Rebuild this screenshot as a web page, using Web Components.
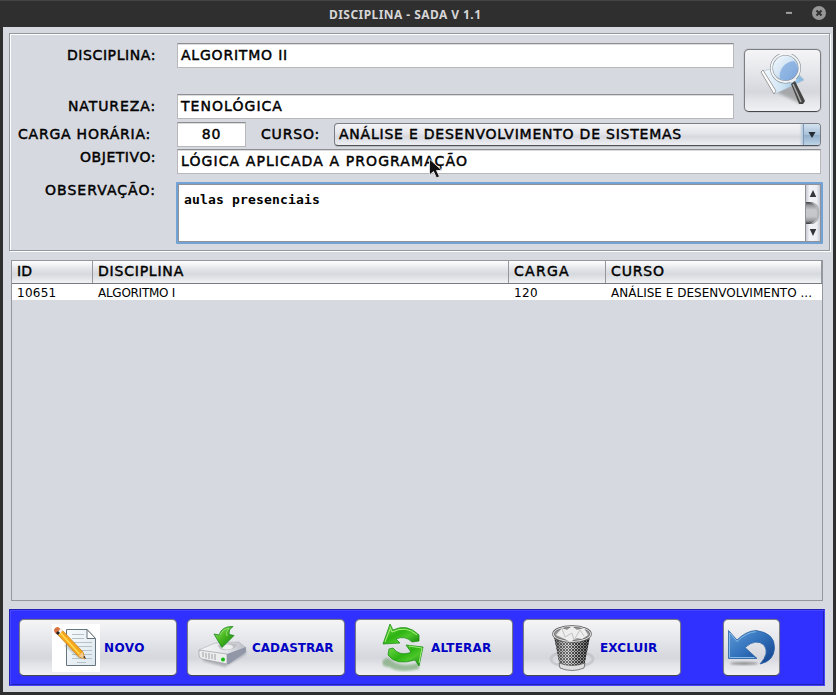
<!DOCTYPE html>
<html lang="pt-BR"><head><meta charset="utf-8"><title>DISCIPLINA - SADA V 1.1</title>
<style>
html,body{margin:0;width:836px;height:695px;overflow:hidden;background:#2f2f2f}
body{font-family:"DejaVu Sans",sans-serif;color:#000}
</style></head><body>
<sada-window></sada-window>
<script>
const define=(name,html,after)=>customElements.define(name,class extends HTMLElement{
  connectedCallback(){
    if(this.shadowRoot)return;
    const t=document.createElement('template');t.innerHTML=html;
    this.attachShadow({mode:'open'}).append(t.content.cloneNode(true));
    if(after)after(this,this.shadowRoot);
  }
});

// Text line whose tracking is adjusted to an exact advance width (w).
define('ui-text',`<style>:host{display:block;white-space:pre;line-height:var(--line,16px);height:16px;flex:none}span{display:inline-block}</style><span></span>`,(el,r)=>{
  const s=r.querySelector('span'),t=el.getAttribute('t');s.textContent=t;
  const w=+el.getAttribute('w');
  if(w)s.style.letterSpacing=((w-s.getBoundingClientRect().width)/t.length)+'px';
});

define('ui-titlebar',`<style>
:host{--line:18px;display:flex;height:27px;box-sizing:border-box;border-top:1px solid #444;background:#2f2f2f;color:#d6d6d6;align-items:center;padding:0 10px 0 329px;font:bold 12px "Noto Sans",sans-serif}
svg{margin-left:auto}</style>
<ui-text t="DISCIPLINA - SADA V 1.1" w="152.5"></ui-text>
<svg width="46" height="26" viewBox="0 0 46 26"><path d="M6 11.9h6" stroke="#a0a0a0" stroke-width="2"/><circle cx="39" cy="12" r="7" fill="#969696"/><path d="M36.500 9.500l5 5m0-5l-5 5" stroke="#303030" stroke-width="2"/></svg>`);

define('ui-field',`<style>
:host{display:flex;box-sizing:border-box;height:25px;background:#fff;border:1px solid #b8b8bb;border-top-color:#8d8e92;box-shadow:inset 0 1px #dcdcde;font:14px "DejaVu Sans",sans-serif;-webkit-text-stroke:.45px;padding:3px 0 0 3px;flex:none}
:host([center]){justify-content:center;padding-left:0}</style><slot></slot>`);

define('ui-label',`<style>:host{display:flex;justify-content:flex-end;width:145px;margin-right:21px;flex:none;font:14px "DejaVu Sans",sans-serif;-webkit-text-stroke:.45px}</style><slot></slot>`);

define('ui-combo',`<style>
:host{display:flex;box-sizing:border-box;width:487px;height:23px;border:1px solid #7b7d84;border-bottom-color:#505258;box-shadow:0 1px #b9bcc3;border-radius:4px;background:linear-gradient(#f5f5f7,#e4e5ea 45%,#d7d9df 60%,#eeeff3);font:14px "DejaVu Sans",sans-serif;-webkit-text-stroke:.45px;padding-left:4px;overflow:hidden}
ui-text{margin-top:2px}
b{margin-left:auto;width:16px;background:linear-gradient(#d3e2ef,#a9c1d9 50%,#93afca 55%,#bed5e8);border-left:1px solid #7f9ab8;box-shadow:-2px 0 2px #b8cadb;display:grid;place-items:center}
</style><ui-text t="ANÁLISE E DESENVOLVIMENTO DE SISTEMAS" w="343"></ui-text><b><svg width="8" height="6"><path d="M0.500 0h7L4 6z" fill="#232b33"/></svg></b>`);

define('ui-textarea',`<style>
:host{--line:18px;display:flex;box-sizing:border-box;width:647px;height:62px;border:2px solid #73a3d4;border-radius:1px;background:#fff;font:bold 13px "DejaVu Sans Mono",monospace;flex:none}
main{flex:1;display:flex;border:1px solid #8f9299;border-right:0;padding:6px 0 0 5px}
svg{border:1px solid #8f9299;flex:none}
</style><main><slot></slot></main>
<svg width="14" height="56" viewBox="0 0 15 56" preserveAspectRatio="none"><defs><linearGradient id="t"><stop stop-color="#c8cad2"/><stop offset=".25" stop-color="#f2f3f7"/><stop offset=".75" stop-color="#eceef3"/><stop offset="1" stop-color="#c9ccd5"/></linearGradient><linearGradient id="kb" x2="0" y2="1"><stop stop-color="#3f3f41"/><stop offset=".15" stop-color="#96979a"/><stop offset=".35" stop-color="#c6c7ca"/><stop offset=".65" stop-color="#c6c7ca"/><stop offset=".85" stop-color="#96979a"/><stop offset="1" stop-color="#39393b"/></linearGradient></defs>
<path fill="url(#t)" d="M0 0h15v56H0z"/><path d="M0 17h4c7 0 10.500 5 10.500 11S11 39 4 39H0z" fill="url(#kb)"/><path d="M4 17q10.500 1 10.500 11T4 39q8-3 8-11t-8-11z" fill="#b4b6ba"/><path d="M7.500 5l3.500 7H4zM7.500 51l3.500-7H4z" fill="#35363a"/></svg>`);

define('ui-button',`<style>
:host{display:flex;box-sizing:border-box;width:158px;height:57px;border:1px solid #7c7d82;border-bottom-color:#46474d;border-radius:5px;background:linear-gradient(#f5f5f7,#e6e7eb 35%,#d7d9df 64%,#d5d7dd 69%,#e4e5e9 82%,#f1f1f4 100%);box-shadow:0 0 1px #55565c;align-items:center;color:#0000c4;font:bold 12px "DejaVu Sans",sans-serif;flex:none}
</style><slot></slot>`);

const icons={
search:`<svg width="50" height="56" viewBox="0 0 50 56"><defs><linearGradient id="a" x1="0" x2="1"><stop stop-color="#f4f9fd"/><stop offset=".5" stop-color="#cbe2f3"/><stop offset="1" stop-color="#7fb4dc"/></linearGradient><linearGradient id="l" x2="1" y2="1"><stop stop-color="#fafdff"/><stop offset=".45" stop-color="#d5e6f5"/><stop offset="1" stop-color="#8fb6e2"/></linearGradient><filter id="f"><feGaussianBlur stdDeviation="1.500"/></filter></defs>
<path d="M17 38l15-10 12 18-4 3z" fill="#777" opacity=".5" filter="url(#f)"/>
<path d="M4 17l26-7 15 16-29 14z" fill="url(#a)" stroke="#aebdca" stroke-width=".6"/><path d="M2 18l2-2 13 21-2 3z" fill="#fff" stroke="#888" stroke-width=".8"/>
<circle cx="26.500" cy="14" r="14" fill="url(#l)"/><path d="M21 25a15 15 0 0 1 14-18 13 13 0 0 1 3 15q-7 7-17 3" fill="#6999d8" opacity=".6"/><circle cx="26.500" cy="14" r="14" fill="none" stroke="#858d95" stroke-width="3"/><circle cx="26.500" cy="14" r="14" fill="none" stroke="#f3f5f7" stroke-width="1.900"/>
<path d="M32 30l4-3 10 20-2 3-4 0z" fill="#444"/><path d="M34 30l8 18" stroke="#aaa" stroke-width="1.500"/><path d="M31 28l6-3" stroke="#eee" stroke-width="2.500"/></svg>`,
novo:`<svg width="48" height="48" viewBox="0 0 48 48"><defs><linearGradient id="p" x2="1" y2="1"><stop stop-color="#f8fbfc"/><stop offset="1" stop-color="#dce7ee"/></linearGradient></defs><path fill="#fff" d="M0 0h48v48H0z"/><path d="M14.500 5.500H35l8.500 9v27h-29z" fill="url(#p)" stroke="#66747e"/><path d="M35 5.500v9h8.500z" fill="#fff" stroke="#66747e"/><path d="M20 10.500h12M20 14.500h12M20 18.500h20M20 22.500h20M20 26.500h20M20 30.500h20M20 34.500h20M25 38.500h9" stroke="#b6c2ca"/><path d="M12 22l14 12 6 1-17-17z" fill="#899" opacity=".35"/>
<path d="M6 11l4-5 21 22 2 7-6-2z" fill="#f7a51b" stroke="#c37b16" stroke-width=".7"/><path d="M8.500 9l19 21" stroke="#ffd94d" stroke-width="1.800"/><path d="M26.500 32l4-4 2 7z" fill="#f2cc96"/><path d="M31 33l3 2-1.500-3z" fill="#222"/><path d="M2 6q1-3 4-3l4 3-4 5q-4-2-4-5" fill="#d9713f"/><path d="M5 9l4-5 2 2-4 5z" fill="#f2efe9"/><path d="M4 9l2-2 2 2-2 2z" fill="#222"/></svg>`,
cad:`<svg width="50" height="46" viewBox="0 0 50 46"><defs><linearGradient id="g" x2="1" y2="1"><stop stop-color="#9ae867"/><stop offset=".5" stop-color="#45b51e"/><stop offset="1" stop-color="#168016"/></linearGradient><linearGradient id="d"><stop stop-color="#f7f7f9"/><stop offset=".6" stop-color="#e4e5e9"/><stop offset="1" stop-color="#b9bcc5"/></linearGradient><filter id="b"><feGaussianBlur stdDeviation="1"/></filter></defs><path d="M5 36l22 6 21-13v-4L6 31z" fill="#70747d" opacity=".45" filter="url(#b)"/><path d="M1 25l16-7 24-1 7 6-19 9z" fill="url(#d)" stroke="#a9acb3" stroke-width=".6"/><path d="M1 25l28 4v10L4 34q-3-1-3-4z" fill="#eceded" stroke="#9b9da3" stroke-width=".7"/><path d="M29 29l19-7v5L31 39h-2z" fill="#9297a8"/><path d="M5 27v5M8 28v5M11 28v6M14 29v5M17 29v6" stroke="#b7b9be" stroke-width="1.500"/><path d="M20 20q11-3 19-1 0 5-10 6-8 1-9-5" fill="#bfc1c6"/><ellipse cx="29" cy="22" rx="6" ry="2.500" fill="#eeeff0"/><circle cx="25" cy="34.500" r="2" fill="#18b915"/><path d="M16 9l5 1Q24 1 35 1.500q-5 3-4 8l5 1-12 12z" fill="url(#g)" stroke="#16861a" stroke-width=".8"/><path d="M22 10q3-6 9-7-4 4-2 8" fill="none" stroke="#8fdf70"/></svg>`,
alt:`<svg width="44" height="48" viewBox="0 0 44 48"><defs><linearGradient id="g" x2="1" y2="1"><stop stop-color="#7bdd50"/><stop offset=".45" stop-color="#2db313"/><stop offset=".65" stop-color="#4cc72a"/><stop offset="1" stop-color="#107f0b"/></linearGradient><filter id="b"><feGaussianBlur stdDeviation="1"/></filter></defs><path d="M0 38q4-6 8-3 10 9 29 4v6q-20 5-30-2-7 0-7-5" fill="#418738" opacity=".45" filter="url(#b)"/><path d="M8 0l3 6Q25-1 37 11v6l-7 1q-7-7-16-3l4 4-17 1z" fill="url(#g)" stroke="#219118" stroke-width=".8"/><path d="M8 3l2 5q14-7 25 3M3 18l5-13" fill="none" stroke="#a7f27c" stroke-width="1"/><path d="M6 31l1-6 4-1q6 8 16 5l2-1-5-7 17 2-4 19-4-6q-19 6-27-5z" fill="url(#g)" stroke="#219118" stroke-width=".8"/><path d="M27 22l13 2-3 15" fill="none" stroke="#9bec78" stroke-width="1"/></svg>`,
exc:`<svg width="46" height="50" viewBox="0 0 46 50"><defs><pattern id="m" width="3" height="3" patternUnits="userSpaceOnUse"><path fill="#c6c6c6" d="M0 0h3v3H0z"/><path d="M0 0l3 3M3 0L0 3" stroke="#282828" stroke-width="1"/></pattern><linearGradient id="s"><stop stop-color="#222" stop-opacity=".7"/><stop offset=".4" stop-color="#fff" stop-opacity=".3"/><stop offset=".65" stop-color="#555" stop-opacity=".3"/><stop offset="1" stop-color="#111" stop-opacity=".7"/></linearGradient></defs><ellipse cx="23" cy="36" rx="21" ry="8" fill="none" stroke="#b9bbc0" stroke-width="3" opacity=".6"/><path d="M5 13h36l-6 31q-12 5-24 0z" fill="url(#m)"/><path d="M5 13h36l-6 31q-12 5-24 0z" fill="url(#s)"/><path d="M10 40q13 5 26 0l-1 5q-12 5-24 0z" fill="#dedede" stroke="#555" stroke-width=".7"/><ellipse cx="23" cy="11" rx="18.500" ry="7.500" fill="#999" stroke="#555" stroke-width="2.500"/><path d="M7 12l6-7 5 2 5-4 5 4 7-2 4 7-6 4-5-1-7 4-5-3z" fill="#eee"/><path d="M13 6l3 8 7-4 2 7 6-10 4 6" fill="none" stroke="#c2c2c2"/><ellipse cx="23" cy="11" rx="18.500" ry="7.500" fill="none" stroke="#ddd" stroke-width="1.200"/></svg>`,
undo:`<svg width="50" height="40" viewBox="0 0 50 40"><defs><linearGradient id="u" x2="1" y2="1"><stop stop-color="#5f9bd6"/><stop offset=".45" stop-color="#3373bd"/><stop offset="1" stop-color="#113e88"/></linearGradient><filter id="b"><feGaussianBlur stdDeviation="1.100"/></filter></defs><ellipse cx="17" cy="34.500" rx="14" ry="1.500" fill="#555" opacity=".6" filter="url(#b)"/><path d="M1.500 1.500L10 11Q19 2 29 1.500 48 4 47.500 19 47 32 33 35 43 24 37 16 29 9 18 18.500L30 29.500H1.500z" fill="url(#u)" stroke="#2b62a4" stroke-width=".8"/><path d="M2.500 4v24.500h25M3 4l7 8.500Q20 3 29 2.700" fill="none" stroke="#81b9e8" stroke-width="1"/></svg>`};
define('ui-icon','<style>:host{display:block;flex:none}svg{display:block}</style>',(el,r)=>r.innerHTML+=icons[el.getAttribute('name')]);

define('ui-form',`<style>
:host{display:flex;flex-direction:column;box-sizing:border-box;width:821px;height:218px;border:1px solid #94979e;box-shadow:inset 1px 1px #fff,1px 1px #fff;padding:0 0 0 1px}
.top{display:flex;height:86px}.col{width:723px;padding-top:9px}.row{display:flex}
.n{margin-top:26px}ui-label{margin-top:4px}
.search{width:77px;height:63px;margin:15px 0 0 10px;padding-left:14px}
</style>
<div class="top"><div class="col">
<div class="row"><ui-label><ui-text t="DISCIPLINA:" w="89"></ui-text></ui-label><ui-field style="width:557px"><ui-text t="ALGORITMO II" w="107"></ui-text></ui-field></div>
<div class="row n"><ui-label><ui-text t="NATUREZA:" w="88"></ui-text></ui-label><ui-field style="width:557px"><ui-text t="TENOLÓGICA" w="102"></ui-text></ui-field></div></div>
<ui-button class="search"><ui-icon name="search" style="margin-top:3px"></ui-icon></ui-button></div>
<div class="row" style="margin-top:2px"><ui-label style="width:140px;margin-right:26px"><ui-text t="CARGA HORÁRIA:" w="133"></ui-text></ui-label><ui-field center style="width:69px"><ui-text t="80" w="19.5"></ui-text></ui-field><ui-label style="width:74px;margin-right:14px"><ui-text t="CURSO:" w="59"></ui-text></ui-label><ui-combo style="margin-top:1px"></ui-combo></div>
<div class="row" style="margin-top:2px"><ui-label style="margin-top:0"><ui-text t="OBJETIVO:" w="76"></ui-text></ui-label><ui-field style="width:644px"><ui-text t="LÓGICA APLICADA A PROGRAMAÇÃO" w="287"></ui-text></ui-field></div>
<div class="row" style="margin-top:8px"><ui-label style="margin-right:20px;margin-top:0"><ui-text t="OBSERVAÇÃO:" w="111"></ui-text></ui-label><ui-textarea><ui-text t="aulas presenciais" w="136"></ui-text></ui-textarea></div>`);

define('ui-table',`<style>
:host{display:block;box-sizing:border-box;width:812px;height:341px;border:1px solid #94979e;margin:8px 0 0 2px}
div{display:grid;grid-template-columns:81px 416px 97px 216px}
.h{height:23px;box-sizing:border-box;border-bottom:1px solid #777a82;background:linear-gradient(#fff,#e3e5e9 35%,#d6d9de 60%,#f1f2f4);font:14px "DejaVu Sans",sans-serif;-webkit-text-stroke:.45px}
.h span{border-right:1px solid #94979e;padding:2px 0 0 5px}
.r{--line:18px;height:16px;background:#fff;font:12px "DejaVu Sans",sans-serif}.r ui-text{padding-left:5px}
</style><div class="h"><span><ui-text t="ID" w="15"></ui-text></span><span><ui-text t="DISCIPLINA" w="86"></ui-text></span><span><ui-text t="CARGA" w="56"></ui-text></span><span><ui-text t="CURSO" w="54"></ui-text></span></div>
<div class="r"><ui-text t="10651" w="39.5"></ui-text><ui-text t="ALGORITMO I" w="77"></ui-text><ui-text t="120" w="24"></ui-text><ui-text t="ANÁLISE E DESENVOLVIMENTO ..." w="201"></ui-text></div>`);

define('ui-toolbar',`<style>
:host{display:flex;box-sizing:border-box;width:816px;height:77px;margin-top:8px;background:#3131ff;border:1px solid #2222b2;border-right-color:#4646ff;border-bottom-color:#4646ff;box-shadow:inset 1px 1px #4646ff,inset -1px -1px #2222b2;padding:9px 0 0 9px;gap:10px}
.sq{width:57px;margin-left:32px;padding-left:3px}
</style>
<ui-button><ui-icon name="novo" style="margin-left:32px"></ui-icon><ui-text t="NOVO" w="41" style="margin-left:4px"></ui-text></ui-button>
<ui-button><ui-icon name="cad" style="margin-left:10px;margin-top:1px"></ui-icon><ui-text t="CADASTRAR" w="81.5" style="margin-left:4px"></ui-text></ui-button>
<ui-button><ui-icon name="alt" style="margin-left:26px"></ui-icon><ui-text t="ALTERAR" w="60.5" style="margin-left:5px"></ui-text></ui-button>
<ui-button><ui-icon name="exc" style="margin-left:25px"></ui-icon><ui-text t="EXCLUIR" w="57.5" style="margin-left:5px"></ui-text></ui-button>
<ui-button class="sq"><ui-icon name="undo" style="margin-top:3px"></ui-icon></ui-button>`);

define('ui-cursor',`<style>:host{position:absolute;left:427px;top:157px}svg{display:block}</style><svg width="18" height="24"><path d="M2.500 2v16l4-3.500 3 6.500 3-1.500-3-6h5.500z" fill="#111" stroke="#ddd"/></svg>`);

define('sada-window',`<style>
:host{display:block;position:relative;width:836px;height:695px;background:#2f2f2f}
main{display:block;box-sizing:border-box;margin-left:3px;width:830px;height:665px;background:#d6d9df;padding:6px 0 0 6px}
ui-table{margin-top:9px}
</style><ui-titlebar></ui-titlebar><main><ui-form></ui-form><ui-table></ui-table><ui-toolbar></ui-toolbar></main><ui-cursor></ui-cursor>`);
</script></body></html>
